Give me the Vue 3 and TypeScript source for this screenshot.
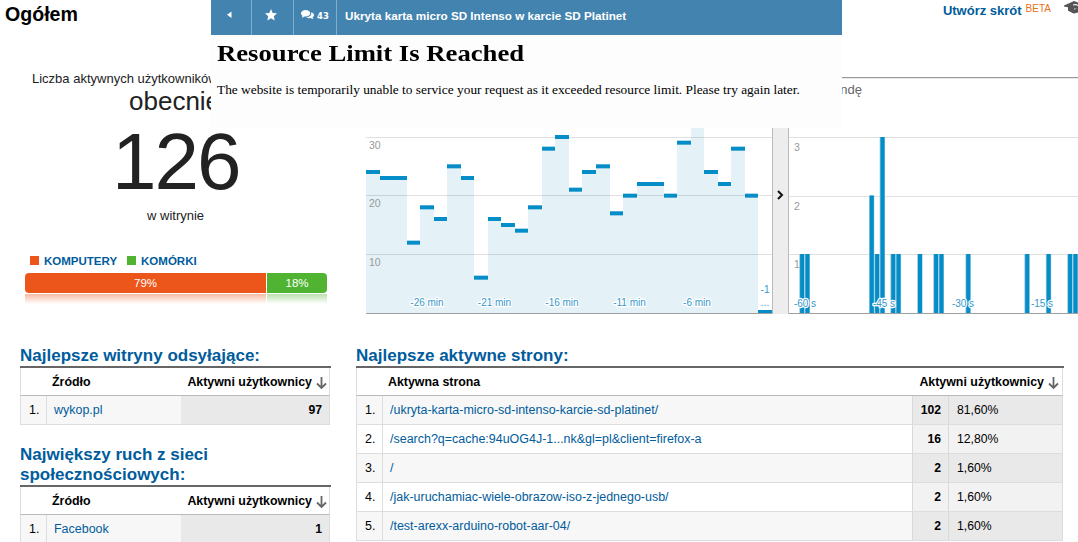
<script setup lang="ts">
interface Row {
  name: string
  users: string
  share?: string
}

const pages: Row[] = [
  { name: '/ukryta-karta-micro-sd-intenso-karcie-sd-platinet/', users: '102', share: '81,60%' },
  { name: '/search?q=cache:94uOG4J-1...nk&gl=pl&client=firefox-a', users: '16', share: '12,80%' },
  { name: '/', users: '2', share: '1,60%' },
  { name: '/jak-uruchamiac-wiele-obrazow-iso-z-jednego-usb/', users: '2', share: '1,60%' },
  { name: '/test-arexx-arduino-robot-aar-04/', users: '2', share: '1,60%' },
]

const sources: { lines: string[]; rows: Row[] }[] = [
  { lines: ['Najlepsze witryny odsyłające:'], rows: [{ name: 'wykop.pl', users: '97' }] },
  { lines: ['Największy ruch z sieci', 'społecznościowych:'], rows: [{ name: 'Facebook', users: '1' }] },
]

const perMinute = [
  24, 23, 23, 12, 18, 16, 25, 23, 6, 16, 15, 14, 18, 28, 30,
  21, 24, 25, 17, 20, 22, 22, 20, 29, 36, 24, 22, 28, 20, 0,
]
const minuteBars = perMinute.map((v, i) => {
  const x = Math.round(i * 13.53)
  const y = v === 0 ? 190 : Math.round((193 - v * 5.87 - 2) * 3) / 3
  return { x, w: Math.round((i + 1) * 13.53) - x, y, h: 193 - y }
})
const minuteLabels = [
  { x: 61, t: '-26 min' },
  { x: 128.5, t: '-21 min' },
  { x: 196, t: '-16 min' },
  { x: 263.5, t: '-11 min' },
  { x: 331, t: '-6 min' },
]

const perSecond: [number, number][] = [
  [0, 1], [1, 1], [13, 2], [14, 1], [15, 3], [17, 1], [18, 1], [22, 1],
  [25, 1], [26, 1], [31, 1], [42, 1], [46, 1], [50, 1], [51, 1],
]
const secondTops = [193, 134, 75.5, 17]
const secondBars = perSecond.map(([i, v]) => ({
  x: 11.1 + i * 5.36,
  y: secondTops[v],
  h: 193 - secondTops[v],
}))
const secondLabels = [
  { x: 16, t: '-60 s' },
  { x: 95, t: '-45 s' },
  { x: 174, t: '-30 s' },
  { x: 253, t: '-15 s' },
]
</script>

<template>
  <div class="page">
    <header class="top">
      <h1>Ogółem</h1>
      <div class="tools">
        <b>Utwórz skrót</b><span class="beta">BETA</span>
        <svg width="14" height="16" viewBox="0 0 14 16">
          <path d="M0 5.5 10 1 14 2.5V9L10 8.5 0 6.5Z" fill="#555" />
          <path d="M4 7.5 10 9.5 14 8.5V12.5L10 13.5 4 10.5Z" fill="#555" />
          <path d="M4 6V10.5L10 13.5V8Z" fill="#555" />
          <path d="M9 5 12 4.5 14 5.5" stroke="#fff" fill="none" stroke-width="1.1" />
        </svg>
      </div>
    </header>

    <div class="overview">
      <section class="metric">
        <div class="caption">Liczba aktywnych użytkowników</div>
        <div class="now">obecnie</div>
        <div class="count">126</div>
        <div class="site">w witrynie</div>
        <div class="legend">
          <i class="orange"></i><b class="l1">KOMPUTERY</b><i class="green"></i><b>KOMÓRKI</b>
        </div>
        <div class="split"><span class="orange">79%</span><span class="green">18%</span></div>
        <div class="mirror"><span class="orange"></span><span class="green"></span></div>
      </section>

      <section class="charts">
        <div class="chart-title"><span>ndę</span></div>
        <div class="plots">
          <svg width="406" height="194" viewBox="0 0 406 194">
            <g v-for="(b, i) in minuteBars" :key="i" shape-rendering="crispEdges">
              <rect :x="b.x" :y="b.y" :width="b.w" :height="b.h" fill="#e4f1f7" />
            </g>
            <path d="M0 17.5H406M0 75.5H406M0 134.5H406" stroke="#000" stroke-opacity=".12" />
            <rect
              v-for="(b, i) in minuteBars" :key="'m' + i"
              :x="b.x" :y="b.y" :width="b.w" :height="i === 29 ? 3 : 4" fill="#058dc7"
            />
            <path d="M0 193.5H406" stroke="#a0a0a0" />
            <g class="axis">
              <text x="3" y="29">30</text><text x="3" y="87">20</text><text x="3" y="146">10</text>
            </g>
            <g class="ticks">
              <text v-for="l in minuteLabels" :key="l.t" :x="l.x" y="186">{{ l.t }}</text>
              <text x="399" y="173">-1</text><text x="399" y="186">...</text>
            </g>
          </svg>
          <div class="divider">
            <svg width="7" height="10" viewBox="0 0 7 10"><path d="M1 1 5 5 1 9" fill="none" stroke="#111" stroke-width="2" /></svg>
          </div>
          <svg width="289" height="194" viewBox="0 0 289 194">
            <path d="M0 17.5H289M0 76.5H289M0 134.5H289" stroke="#e0e0e0" />
            <g v-for="(b, i) in secondBars" :key="i">
              <rect :x="b.x - 0.8" :y="b.y" width="5.3" :height="b.h" fill="#8cc5e0" />
              <rect :x="b.x" :y="b.y" width="4" :height="b.h" fill="#058dc7" />
            </g>
            <path d="M0 193.5H289" stroke="#a0a0a0" />
            <g class="axis">
              <text x="5" y="31">3</text><text x="5" y="90">2</text><text x="5" y="148">1</text>
            </g>
            <g class="ticks">
              <text v-for="l in secondLabels" :key="l.t" :x="l.x" y="187">{{ l.t }}</text>
            </g>
          </svg>
        </div>
      </section>
    </div>

    <div class="tables">
      <div class="sources">
        <section v-for="s in sources" :key="s.lines[0]">
          <h2><span v-for="line in s.lines" :key="line">{{ line }}</span></h2>
          <div class="table">
            <div class="head">
              <span>Źródło</span>
              <span class="sort">Aktywni użytkownicy
                <svg width="11" height="13" viewBox="0 0 11 13"><path d="M5.5 0V11M1 6.5 5.5 11 10 6.5" fill="none" stroke="#666" stroke-width="1.8" /></svg>
              </span>
            </div>
            <div v-for="(r, i) in s.rows" :key="r.name" class="row">
              <span class="num">{{ i + 1 }}.</span><a>{{ r.name }}</a><b>{{ r.users }}</b>
            </div>
          </div>
        </section>
      </div>
      <section class="pages">
        <h2><span>Najlepsze aktywne strony:</span></h2>
        <div class="table">
          <div class="head">
            <span>Aktywna strona</span>
            <span class="sort">Aktywni użytkownicy
              <svg width="11" height="13" viewBox="0 0 11 13"><path d="M5.5 0V11M1 6.5 5.5 11 10 6.5" fill="none" stroke="#666" stroke-width="1.8" /></svg>
            </span>
          </div>
          <div v-for="(r, i) in pages" :key="r.name" class="row">
            <span class="num">{{ i + 1 }}.</span><a>{{ r.name }}</a><b>{{ r.users }}</b><span class="share">{{ r.share }}</span>
          </div>
        </div>
      </section>
    </div>

    <div class="popup">
      <div class="bar">
        <span class="cell back"><svg width="5" height="8" viewBox="0 0 5 8"><path d="M4.5 .5V7L0 3.8Z" fill="#fff" /></svg></span>
        <span class="cell fav"><svg width="12" height="12" viewBox="0 0 12 12"><path d="M6 0 7.7 3.9 12 4.3 8.8 7.2 9.7 11.4 6 9.2 2.3 11.4 3.2 7.2 0 4.3 4.3 3.9Z" fill="#fff" /></svg></span>
        <span class="cell talk">
          <svg width="13" height="10" viewBox="0 0 13 10"><path d="M4.7 0C7.3 0 9.3 1.4 9.3 3.3S7.3 6.6 4.7 6.6L3.5 6.5C2.7 7.2 1.8 7.6.7 7.7 1.2 7.1 1.5 6.5 1.5 5.8.6 5.2 0 4.3 0 3.3 0 1.4 2.1 0 4.7 0ZM10.2 2.3C11.9 2.8 13 3.8 13 5.1 13 6 12.5 6.8 11.6 7.3 11.6 8 12 8.6 12.4 9.1 11.2 9 10.4 8.7 9.7 8.1 7.8 8.4 6.2 8 5.2 7.3 8.3 7.3 10.8 5.5 10.2 2.3Z" fill="#fff" /></svg>
          <span>43</span>
        </span>
        <span class="title">Ukryta karta micro SD Intenso w karcie SD Platinet</span>
      </div>
      <h3>Resource Limit Is Reached</h3>
      <p>The website is temporarily unable to service your request as it exceeded resource limit. Please try again later.</p>
    </div>
  </div>
</template>

<style>
body { background: #fff; overflow: hidden; }
</style>

<style scoped>
.page { position: relative; width: 1078px; height: 542px; overflow: hidden; background: #fff; color: #222; font: 13px/15px "Liberation Sans", Arial, sans-serif; white-space: nowrap; }
h1, h2, h3, p { margin: 0; }
.top { display: flex; justify-content: space-between; height: 64px; padding-left: 5px; }
h1 { font-size: 19.6px; line-height: 28px; color: #000; }
.tools { display: flex; color: #005c9c; }
.tools b { line-height: 21px; }
.beta { margin: 0 13px 0 4px; color: #e8701a; font-size: 10px; line-height: 17px; }
.overview { display: flex; height: 281px; }
.metric { width: 366px; flex: none; color: #222; }
.caption { padding: 7px 0 0 32px; }
.now { padding-left: 129px; font-size: 26px; line-height: 30px; }
.count { padding: 4px 0 0 112px; font-size: 80px; line-height: 84px; letter-spacing: -2px; }
.site { padding: 4px 0 0 147px; }
.legend { display: flex; align-items: center; margin-top: 29px; padding-left: 30px; color: #005c9c; font-size: 11.5px; }
.legend i { width: 9px; height: 9px; margin-right: 5px; }
.legend b { padding-top: 2px; }
.l1 { margin-right: 10px; }
.orange { background: #ed561b; }
.green { background: #50b432; }
.split, .mirror { display: grid; grid-template-columns: 241px 60px; gap: 1px; width: 302px; margin-left: 25px; overflow: hidden; }
.split { height: 20px; margin-top: 4px; border-radius: 4px; color: #fff; font-size: 11.5px; line-height: 20px; text-align: center; }
.mirror { height: 10px; margin-top: 1px; opacity: .4; mask-image: linear-gradient(#000, transparent); }
.charts { flex: none; width: 712px; }
.chart-title { height: 50px; margin-top: 13px; border-top: 1px solid #999; box-shadow: inset 0 1px #e9e9e9; color: #666; }
.chart-title span { display: block; width: 496px; padding-top: 4px; text-align: right; }
.plots { display: flex; margin-top: -8px; }
.plots svg { display: block; }
.divider { display: flex; box-sizing: border-box; width: 17px; height: 194px; align-items: center; justify-content: center; border: solid #bbb; border-width: 0 1px; background: #ededed; }
.divider svg { margin-top: -44px; }
.axis { fill: #999; font-size: 10.5px; }
.ticks { fill: #3698cc; font-size: 10px; text-anchor: middle; stroke: #fff; stroke-width: 2.5px; stroke-linejoin: round; paint-order: stroke; }
.tables { display: flex; gap: 25px; padding-left: 20px; }
.sources { display: flex; flex-direction: column; gap: 19px; width: 311px; }
.pages { width: 708px; }
h2 { padding-top: 1px; color: #005c9c; font-size: 17px; line-height: 20px; }
h2 span { display: block; }
.table { border-top: 2px solid #666; }
.head, .row { display: grid; margin-right: 1px; border: solid #ddd; border-width: 0 1px 1px; color: #000; }
.head { grid-template-columns: auto auto; justify-content: space-between; height: 27px; padding: 0 2px 0 31px; border-bottom-color: #bbb; font-size: 12.4px; font-weight: bold; line-height: 28px; }
.pages .head { padding-right: 3px; }
.sort { display: flex; align-items: center; gap: 4px; }
.sort svg { margin-top: 2px; }
.row { grid-template-columns: 26px 134px 1fr; height: 28px; background: #f7f7f7; font-size: 12.48px; line-height: 28px; }
.num { padding-left: 8px; border-right: 1px solid #ddd; }
.row a { padding-left: 7px; color: #005c9c; }
.row b { padding-right: 7px; background: #e9e9e9; text-align: right; font-size: 12.2px; }
.pages .row { grid-template-columns: 26px 529px 36px 1fr; }
.pages .row:nth-child(odd) { background: #fff; }
.pages .row:nth-child(odd) b, .pages .row:nth-child(odd) .share { background: #f2f2f2; }
.pages .row b, .share { border-left: 1px solid #d8d8d8; background: #e9e9e9; }
.share { padding-left: 8px; font-size: 12.2px; }
.popup { position: absolute; top: 0; left: 211px; width: 631px; height: 128px; background: #fdfdfd; color: #000; font-family: "Liberation Serif", "Times New Roman", serif; }
.bar { display: flex; height: 35px; background: #4383b0; color: #fff; font: bold 11.7px/32px "Liberation Sans", Arial, sans-serif; }
.cell { display: flex; box-sizing: border-box; align-items: center; justify-content: center; padding-bottom: 6px; border-right: 1px solid #7fadcc; }
.back { width: 41px; padding-right: 3px; }
.fav { width: 42px; padding-right: 4px; }
.talk { width: 43px; gap: 3px; padding-bottom: 5px; font-family: "DejaVu Sans", sans-serif; font-size: 8.5px; }
.talk span { padding-top: 2px; }
.title { padding-left: 8px; }
h3 { margin: 4px 0 0 6px; font-size: 24px; line-height: 29px; transform: scaleX(1.112); transform-origin: left; }
p { margin: 14px 0 0 6px; font-size: 13.37px; line-height: 15px; }
</style>
